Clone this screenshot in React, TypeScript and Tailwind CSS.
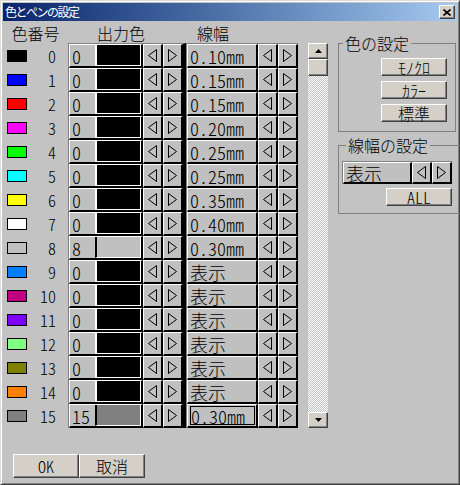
import React from 'react';

type Row = { swatch: string; num: string; fill: string; edge: string; width: string };

const rows: Row[] = [
  { swatch: 'bg-black', num: '0', fill: 'bg-black', edge: 'border-l-white', width: '0.10mm' },
  { swatch: 'bg-[#0000ff]', num: '0', fill: 'bg-black', edge: 'border-l-white', width: '0.15mm' },
  { swatch: 'bg-[#ff0000]', num: '0', fill: 'bg-black', edge: 'border-l-white', width: '0.15mm' },
  { swatch: 'bg-[#ff00ff]', num: '0', fill: 'bg-black', edge: 'border-l-white', width: '0.20mm' },
  { swatch: 'bg-[#00ff00]', num: '0', fill: 'bg-black', edge: 'border-l-white', width: '0.25mm' },
  { swatch: 'bg-[#00ffff]', num: '0', fill: 'bg-black', edge: 'border-l-white', width: '0.25mm' },
  { swatch: 'bg-[#ffff00]', num: '0', fill: 'bg-black', edge: 'border-l-white', width: '0.35mm' },
  { swatch: 'bg-white', num: '0', fill: 'bg-black', edge: 'border-l-white', width: '0.40mm' },
  { swatch: 'bg-[#c0c0c0]', num: '8', fill: 'bg-[#c0c0c0]', edge: 'border-l-black', width: '0.30mm' },
  { swatch: 'bg-[#0080ff]', num: '0', fill: 'bg-black', edge: 'border-l-white', width: '表示' },
  { swatch: 'bg-[#c00080]', num: '0', fill: 'bg-black', edge: 'border-l-white', width: '表示' },
  { swatch: 'bg-[#8000ff]', num: '0', fill: 'bg-black', edge: 'border-l-white', width: '表示' },
  { swatch: 'bg-[#80ff80]', num: '0', fill: 'bg-black', edge: 'border-l-white', width: '表示' },
  { swatch: 'bg-[#808000]', num: '0', fill: 'bg-black', edge: 'border-l-white', width: '表示' },
  { swatch: 'bg-[#ff8000]', num: '0', fill: 'bg-black', edge: 'border-l-white', width: '表示' },
  { swatch: 'bg-[#808080]', num: '15', fill: 'bg-[#808080]', edge: 'border-l-black', width: '0.30mm' },
];

// raised grid cell, like the old owner-drawn list controls
const raised =
  'border-t border-l border-r-2 border-b-2 border-t-white border-l-white border-r-black border-b-black bg-[#c0c0c0]';
const button =
  'bg-[#d4d0c8] border border-t-white border-l-white border-r-[#404040] border-b-[#404040] shadow-[inset_-1px_-1px_#808080] flex items-center justify-center leading-none';
const half = "[font-feature-settings:'hwid']";

function Arrow({ dir }: { dir: 'l' | 'r' }) {
  return (
    <svg width="9" height="13" viewBox="0 0 9 13">
      <polygon
        points={dir === 'l' ? '8.5,0.5 0.5,6.5 8.5,12.5' : '0.5,0.5 8.5,6.5 0.5,12.5'}
        fill="none"
        stroke="black"
        strokeWidth="1"
      />
    </svg>
  );
}

function ArrowCell({ dir }: { dir: 'l' | 'r' }) {
  return (
    <div className={`${raised} w-[20px] flex items-center justify-center`}>
      <Arrow dir={dir} />
    </div>
  );
}

function ScrollButton({ up }: { up: boolean }) {
  return (
    <div className={`${button} w-[20px] h-[16px]`}>
      <svg width="7" height="4" viewBox="0 0 7 4">
        <polygon points={up ? '3.5,0 7,4 0,4' : '0,0 7,0 3.5,4'} fill="black" />
      </svg>
    </div>
  );
}

function isText(w: string) {
  return w === '表示';
}

export default function App() {
  return (
    <div className="w-[460px] h-[485px] bg-[#c3c3c3] border border-t-[#dcdcdc] border-l-[#dcdcdc] border-r-[#404040] border-b-[#404040] shadow-[inset_1px_1px_#ffffff,inset_-1px_-1px_#808080] p-[2px] flex flex-col font-['Noto_Sans_CJK_JP',sans-serif] font-light text-black select-none">
      {/* title bar */}
      <div className="h-[18px] bg-linear-to-r from-[#0a246a] to-[#a6caf0] flex items-center justify-between pl-[2px] pr-[2px]">
        <span className="text-white text-[12px] tracking-[-1.5px] leading-none font-normal">色とペンの設定</span>
        <div className={`${button} w-[16px] h-[14px]`}>
          <svg width="8" height="7" viewBox="0 0 8 7">
            <path d="M0.5 0.5 L7.5 6.5 M7.5 0.5 L0.5 6.5" stroke="black" strokeWidth="1.6" />
          </svg>
        </div>
      </div>

      <div className="flex">
        {/* left: header + table */}
        <div className="flex flex-col">
          <div className="h-[22px] pt-[1px] flex text-[16px] leading-none">
            <div className="w-[65px] flex items-center justify-center">色番号</div>
            <div className="w-[118px] flex items-center pl-[29px]">出力色</div>
            <div className="w-[112px] flex items-center pl-[11px]">線幅</div>
          </div>

          <div className="flex">
            <div className="w-[65px] pt-[1px] flex flex-col">
              {rows.map((r, i) => (
                <div key={i} className="h-[24px] flex items-center pl-[4px]">
                  <div className={`w-[20px] h-[12px] border border-black ${r.swatch}`} />
                  <div className={`w-[29px] text-right text-[16px] leading-none ${half}`}>{i}</div>
                </div>
              ))}
            </div>

            <div className="w-[118px] border-t border-l border-r-[3px] border-t-[#808080] border-l-[#808080] border-r-black flex flex-col">
              {rows.map((r, i) => (
                <div key={i} className="h-[24px] flex">
                  <div className={`${raised} w-[74px] flex`}>
                    <span className={`w-[25px] pl-[2px] flex items-center text-[18px] leading-none ${half}`}>{r.num}</span>
                    <div className={`flex-1 border-l-2 border-r border-b border-r-white border-b-white ${r.edge} ${r.fill}`} />
                  </div>
                  <ArrowCell dir="l" />
                  <ArrowCell dir="r" />
                </div>
              ))}
            </div>

            <div className="w-[112px] border-t border-l border-t-[#808080] border-l-[#808080] flex flex-col">
              {rows.map((r, i) => (
                <div key={i} className="h-[24px] flex">
                  <div className={`${raised} w-[71px] flex items-center pl-[2px]`}>
                    {i === 15 ? (
                      <span className={`h-[19px] w-[65px] border border-black flex items-center text-[18px] leading-none ${half}`}>
                        {r.width}
                      </span>
                    ) : (
                      <span className={`text-[18px] leading-none ${isText(r.width) ? '' : half}`}>{r.width}</span>
                    )}
                  </div>
                  <ArrowCell dir="l" />
                  <ArrowCell dir="r" />
                </div>
              ))}
            </div>

            {/* scrollbar */}
            <div className="ml-[10px] w-[20px] h-[385px] flex flex-col bg-[repeating-conic-gradient(#ffffff_0%_25%,#c0c0c0_0%_50%)] bg-[length:2px_2px]">
              <ScrollButton up />
              <div className={`${button} w-[20px] h-[17px]`} />
              <div className="flex-1" />
              <ScrollButton up={false} />
            </div>
          </div>
        </div>

        {/* right panel */}
        <div className="ml-[10px] pt-[14px] flex flex-col">
          <fieldset className="w-[118px] border border-[#808080] flex flex-col items-end pr-[8px] pt-[7px] pb-[9px] gap-[5px]">
            <legend className="ml-[4px] px-[2px] text-[16px] leading-[16px]">色の設定</legend>
            <button className={`${button} w-[66px] h-[18px] text-[16px]`}>ﾓﾉｸﾛ</button>
            <button className={`${button} w-[66px] h-[18px] text-[16px]`}>ｶﾗｰ</button>
            <button className={`${button} w-[66px] h-[18px] text-[16px]`}>標準</button>
          </fieldset>

          <fieldset className="mt-[5px] w-[118px] border border-[#808080] flex flex-col pl-[3px] pr-[8px] pt-[8px] pb-[7px]">
            <legend className="ml-[4px] px-[2px] text-[16px] leading-[16px]">線幅の設定</legend>
            <div className="w-[110px] border-t border-l border-t-[#808080] border-l-[#808080] flex h-[23px]">
              <div className={`${raised} w-[69px] flex items-center pl-[2px] text-[18px] leading-none`}>表示</div>
              <ArrowCell dir="l" />
              <ArrowCell dir="r" />
            </div>
            <div className="mt-[4px] flex justify-end">
              <button className={`${button} w-[66px] h-[18px] text-[16px] ${half}`}>ALL</button>
            </div>
          </fieldset>
        </div>
      </div>

      {/* bottom buttons */}
      <div className="mt-[26px] ml-[10px] flex">
        <button className={`${button} w-[66px] h-[24px] text-[16px] ${half}`}>OK</button>
        <button className={`${button} w-[66px] h-[24px] text-[16px]`}>取消</button>
      </div>
    </div>
  );
}
